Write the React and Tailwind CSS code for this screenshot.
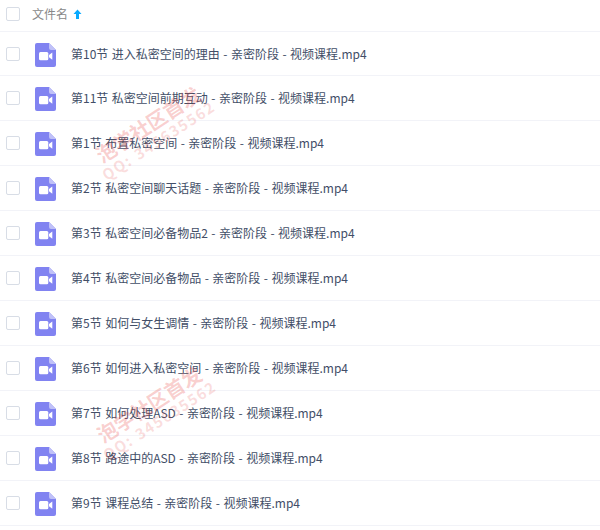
const files = [
  "第10节 进入私密空间的理由 - 亲密阶段 - 视频课程.mp4",
  "第11节 私密空间前期互动 - 亲密阶段 - 视频课程.mp4",
  "第1节 布置私密空间 - 亲密阶段 - 视频课程.mp4",
  "第2节 私密空间聊天话题 - 亲密阶段 - 视频课程.mp4",
  "第3节 私密空间必备物品2 - 亲密阶段 - 视频课程.mp4",
  "第4节 私密空间必备物品 - 亲密阶段 - 视频课程.mp4",
  "第5节 如何与女生调情 - 亲密阶段 - 视频课程.mp4",
  "第6节 如何进入私密空间 - 亲密阶段 - 视频课程.mp4",
  "第7节 如何处理ASD - 亲密阶段 - 视频课程.mp4",
  "第8节 路途中的ASD - 亲密阶段 - 视频课程.mp4",
  "第9节 课程总结 - 亲密阶段 - 视频课程.mp4",
];

const Checkbox = () => (
  <span className="block w-[14px] h-[14px] shrink-0 rounded-[2px] border border-[#d8dde6] bg-white" />
);

const VideoIcon = () => (
  <svg width="21" height="24" viewBox="0 0 21 24" className="block shrink-0">
    <path d="M2 0H14L21 7V22a2 2 0 0 1-2 2H2a2 2 0 0 1-2-2V2a2 2 0 0 1 2-2Z" fill="#8183f1" />
    <path d="M14 0L21 7H16a2 2 0 0 1-2-2Z" fill="#c0c1f8" />
    <rect x="4" y="9" width="9.3" height="8.3" rx="1.5" fill="#fff" />
    <path d="M14 12L17.3 9.5V16.8L14 14.3Z" fill="#fff" />
  </svg>
);

const SortArrow = () => (
  <svg width="9" height="10" viewBox="0 0 9 10" className="ml-[5px] shrink-0">
    <path d="M4.5 0.5L8.5 5H6V10H3V5H0.5Z" fill="#09aaff" />
  </svg>
);

const Watermark = ({ className }) => (
  <div className={`absolute pointer-events-none -translate-x-1/2 -translate-y-1/2 -rotate-[33deg] text-[#e8433f]/25 font-bold leading-[19px] text-center whitespace-nowrap ${className}`}>
    <div className="text-[20px]">泡学社区首发</div>
    <div className="text-[15px] tracking-[1.5px] opacity-70">QQ: 345635562</div>
  </div>
);

const App = () => {
  return (
    <div className="relative w-[600px] h-[530px] overflow-hidden bg-white font-['Noto_Sans_CJK_SC','Microsoft_YaHei',sans-serif] text-xs [word-spacing:0.8px]">
      {/* Header */}
      <div className="flex items-center h-[32px] pb-[3px] pl-[6px] border-b border-[#f2f3f8]">
        <Checkbox />
        <span className="ml-[12px] text-[#888]">文件名</span>
        <SortArrow />
      </div>

      {/* Rows */}
      {files.map((name, i) => (
        <div key={name} className={`flex items-center pl-[6px] border-b border-[#f2f3f8] ${i === 0 ? "h-[44px]" : "h-[45px]"}`}>
          <Checkbox />
          <div className="ml-[15px] mt-[2px]">
            <VideoIcon />
          </div>
          <span className="ml-[15px] text-[#424e67]">{name}</span>
        </div>
      ))}

      <Watermark className="left-[153px] top-[132px]" />
      <Watermark className="left-[154px] top-[412px]" />
    </div>
  );
};

export default App;
